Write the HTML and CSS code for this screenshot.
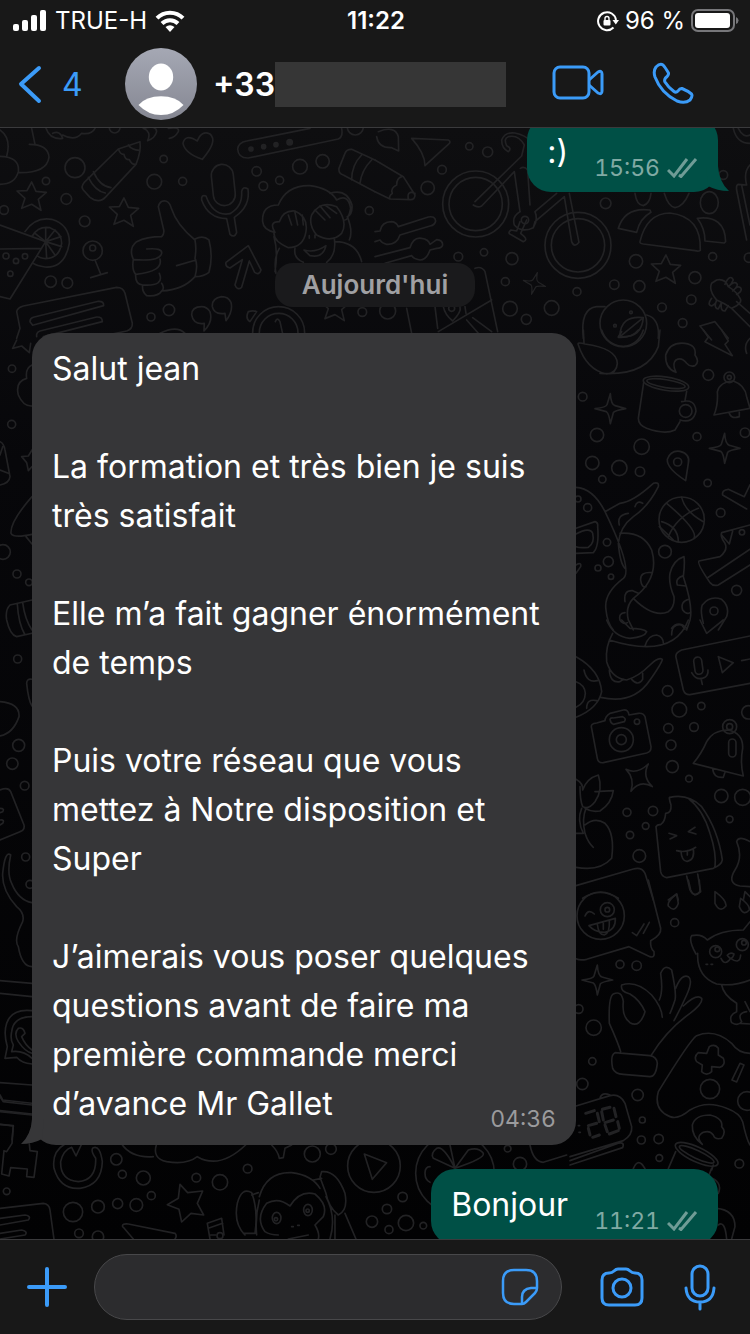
FILE: index.html
```html
<!DOCTYPE html>
<html lang="fr">
<head>
  <meta charset="UTF-8">
  <meta name="viewport" content="width=device-width, initial-scale=1.0">
  <title>Chat</title>
  <link rel="stylesheet" href="styles.css">
</head>
<body>
  <header class="header">
    <!-- Status bar -->
    <div class="status-bar">
      <div class="status-left">
        <svg width="34" height="22" viewBox="0 0 34 22" fill="#ffffff">
          <rect x="0" y="14" width="6" height="7" rx="2"></rect>
          <rect x="9" y="10" width="6" height="11" rx="2"></rect>
          <rect x="18" y="5" width="6" height="16" rx="2"></rect>
          <rect x="27" y="0" width="6" height="21" rx="2"></rect>
        </svg>
        <span>TRUE-H</span>
        <svg width="30" height="22" viewBox="0 0 30 22" fill="none" stroke="#ffffff" stroke-width="4">
          <path d="M2 8.200C9 1 21 1 28 8.200"></path>
          <path d="M7 13.500C11.500 9 18.500 9 23 13.500"></path>
          <path d="M10.500 17Q15 13.500 19.500 17L15 22Z" fill="#ffffff" stroke="none"></path>
        </svg>
      </div>
      <div class="status-time">11:22</div>
      <div class="status-right">
        <svg width="22" height="22" viewBox="0 0 22 22" fill="none" stroke="#ffffff" stroke-width="2">
          <path d="M16.500 17.500A9 9 0 1 1 19 10"></path>
          <path d="M15.500 10h6.500l-3.200 4.500z" fill="#ffffff" stroke="none"></path>
          <rect x="6.500" y="10" width="7" height="5.500" rx="1" fill="#ffffff" stroke="none"></rect>
          <path d="M8 10.500V8.500a2 2 0 0 1 4 0v2" stroke-width="1.400"></path>
        </svg>
        <span>96 %</span>
        <svg width="48" height="24" viewBox="0 0 48 24">
          <rect x="1" y="1" width="42" height="21" rx="6" fill="none" stroke="#77777a" stroke-width="2"></rect>
          <rect x="4" y="4" width="35" height="15" rx="3" fill="#ffffff"></rect>
          <path d="M45 8q2.500 1 2.500 3.500T45 15z" fill="#77777a"></path>
        </svg>
      </div>
    </div>

    <!-- Contact -->
    <div class="nav">
      <button class="back" type="button" aria-label="Retour">
        <svg width="24" height="40" viewBox="0 0 24 40" fill="none" stroke="currentColor" stroke-width="4" stroke-linecap="round" stroke-linejoin="round">
          <path d="M21 4L3 20L21 37"></path>
        </svg>
        <span>4</span>
      </button>
      <svg class="avatar" viewBox="0 0 72 72">
        <defs>
          <linearGradient id="avatar-bg" x1="0" y1="0" x2="0" y2="1">
            <stop offset="0" stop-color="#a5a8b4"></stop>
            <stop offset="1" stop-color="#858792"></stop>
          </linearGradient>
        </defs>
        <circle cx="36" cy="36" r="36" fill="url(#avatar-bg)"></circle>
        <ellipse cx="36" cy="29" rx="12.200" ry="13.500" fill="#ffffff"></ellipse>
        <path d="M13.500 57Q21 48.300 36 48.300T58.500 57Q49 67 36 67T13.500 57Z" fill="#ffffff"></path>
      </svg>
      <div class="contact">
        <span>+33</span>
        <span class="redacted"></span>
      </div>
      <div class="calls">
        <button class="icon-btn" type="button" aria-label="Appel vidéo">
          <svg width="52" height="36" viewBox="0 0 52 36" fill="none" stroke="currentColor" stroke-width="3" stroke-linejoin="round">
            <rect x="2" y="2" width="35" height="31" rx="6"></rect>
            <path d="M37 15L46 7Q50 5 50 9V26Q50 30 46 28L37 20"></path>
          </svg>
        </button>
        <button class="icon-btn" type="button" aria-label="Appel">
          <svg width="42" height="42" viewBox="0 0 42 42" fill="none" stroke="currentColor" stroke-width="3" stroke-linejoin="round">
            <path d="M4 5Q8 1 11 3Q13 5 16.500 11Q17 13 13.500 16Q12 18 13 20Q16 25 22 29.500Q24 31 26 29Q28 26 30 26.500Q36 29 39.500 32Q41 34 38 38Q33 42 25 39Q9 31 3 15Q1 9 4 5Z"></path>
          </svg>
        </button>
      </div>
    </div>
  </header>

  <main class="chat">
    <svg class="wallpaper" viewBox="0 128 750 1112" preserveAspectRatio="xMidYMin slice" aria-hidden="true">
      <defs>
        <linearGradient id="paper" x1="0" y1="0" x2="0" y2="1">
          <stop offset="0" stop-color="#0e0e10"></stop>
          <stop offset="0.300" stop-color="#07070a"></stop>
          <stop offset="1" stop-color="#020203"></stop>
        </linearGradient>
        <path id="star" d="M0-43L13-15L44-12L20 9L28 42L0 24L-30 36L-20 6L-44-16L-14-17Z"></path>
        <path id="spark" d="M0-45Q2-12 14-9L46 0Q12 6 9 12L0 45Q-4 14-12 9L-46 0Q-12-4-10-12Z"></path>
      </defs>
      <rect x="0" y="128" width="750" height="1112" fill="url(#paper)"></rect>

      <!-- Top left -->
      <g class="doodle" transform="translate(0 125) scale(0.3333)">
        <circle cx="225" cy="128" r="30"></circle><circle cx="199" cy="222" r="16"></circle>
        <circle cx="138" cy="168" r="11"></circle><circle cx="12" cy="255" r="13"></circle>
        <circle cx="254" cy="289" r="16"></circle><circle cx="463" cy="170" r="22"></circle>
        <circle cx="491" cy="102" r="11"></circle><circle cx="548" cy="169" r="12"></circle>
        <circle cx="770" cy="139" r="14"></circle><circle cx="790" cy="183" r="13"></circle>
        <circle cx="839" cy="166" r="12"></circle><circle cx="900" cy="125" r="22"></circle>
        <circle cx="968" cy="109" r="20"></circle><circle cx="1108" cy="257" r="12"></circle>
        <circle cx="152" cy="470" r="17"></circle><circle cx="202" cy="474" r="16"></circle>
        <circle cx="453" cy="576" r="12"></circle><circle cx="507" cy="555" r="17"></circle>
        <circle cx="1087" cy="561" r="13"></circle><circle cx="1066" cy="6" r="24"></circle>
        <circle cx="344" cy="8" r="16"></circle>
        <use href="#star" x="95" y="214"></use>
        <use href="#star" x="372" y="262"></use>
        <use href="#star" x="1005" y="545"></use>
        <path d="M0 15Q35 40 20 94M0 94Q60 95 55 140Q45 178 0 178M95 10L105 58M88 58Q145 58 147 97Q140 145 55 143"></path>
        <path d="M138 10Q150 45 188 40Q180 15 158 25M188 30Q225 50 245 25Q275 30 285 10M430 10Q470 0 470 20Q465 40 443 47Q455 20 430 10M505 10Q540 5 535 20Q525 38 508 40"></path>
        <path d="M355 72L420 50Q424 80 408 118L318 215Q298 238 270 217L250 195Q242 185 252 173ZM355 72Q362 90 372 88Q375 105 388 104Q395 120 408 118M385 60Q395 75 418 76M280 140Q300 185 333 188M265 157Q285 198 316 204"></path>
        <path d="M607 103Q555 85 549 55Q555 25 592 48Q605 15 630 27Q655 48 607 103Z"></path>
        <path d="M1025 10Q1030 35 1015 42L745 99Q715 100 713 72Q715 52 740 48L930 10"></path>
        <g class="dots"><circle cx="753" cy="72" r="6"></circle><circle cx="791" cy="65" r="6"></circle><circle cx="828" cy="59" r="6"></circle><circle cx="869" cy="52" r="8"></circle></g>
        <rect x="637" y="118" width="66" height="124" rx="33" transform="rotate(-6 670 180)"></rect>
        <path d="M605 225Q603 208 618 213Q640 275 690 266Q728 245 725 200Q728 182 744 192Q752 245 703 277L710 323Q703 340 690 328L680 281Q625 280 605 225Z"></path>
        <path d="M475 245Q480 225 497 228Q510 232 514 250Q530 300 585 345Q590 370 585 400Q595 420 585 455Q550 495 485 498Q475 515 440 512Q425 500 428 480Q405 478 407 448Q395 435 400 403Q385 370 410 350Q440 335 485 335Q495 325 490 310ZM440 372Q488 368 485 385Q480 410 402 404M480 402Q490 440 407 448M478 445Q495 485 428 480M485 475Q495 490 485 498M530 422L588 405M585 342Q610 330 627 345Q640 395 627 442Q610 455 585 455"></path>
        <path d="M745 362L783 435Q778 452 764 442L748 408L725 487Q712 498 705 480L727 404L690 429Q675 425 678 412Z"></path>
        <path d="M835 240Q860 180 930 182Q990 190 1010 225Q1045 205 1052 250Q1045 285 1035 285M990 205Q1040 190 1056 240Q1058 270 1042 275Q1060 320 1048 345M835 240Q785 240 788 290Q790 315 825 322M825 322Q805 290 838 290Q850 255 885 258Q925 275 918 320Q910 368 865 368Q820 350 822 322M935 270Q960 225 1010 245Q1045 290 1025 325Q995 355 950 330Q925 300 935 270M865 270L875 300M885 262L893 300M907 270L910 300M945 255L975 285M960 243L990 278M975 240L1010 265M928 332v8M945 330v8M912 375Q945 385 978 362Q970 400 930 392ZM885 370Q880 400 910 412M1003 340Q1010 390 980 412M822 335Q835 380 825 440M838 370Q820 400 828 445M1005 350Q1070 350 1085 410"></path>
        <circle cx="278" cy="377" r="29"></circle><circle cx="278" cy="369" r="9"></circle>
        <path d="M285 405L302 447M272 458L322 443"></path>
        <path d="M75 320Q105 275 155 283Q210 300 208 355Q195 430 135 426Q110 422 100 415M97 333Q115 302 150 308Q185 322 185 355Q178 400 137 401Q120 400 112 393M137 350V308M137 350L165 315M137 350L183 335M137 350L185 365M137 350L165 390M137 350L140 400M137 350L105 325"></path>
        <path d="M0 300L137 350L30 522L0 515M0 372L125 370"></path>
        <circle cx="18" cy="393" r="9"></circle><circle cx="48" cy="408" r="8"></circle><circle cx="75" cy="394" r="8"></circle><circle cx="31" cy="446" r="8"></circle>
        <path d="M50 640L60 610L50 560Q52 548 70 543L350 487Q370 487 375 505L397 595Q398 612 380 618L300 635M90 590Q90 580 100 577L295 529Q312 528 311 542L98 601ZM110 635Q108 622 120 618L290 576Q307 575 307 590L130 635"></path>
        <path d="M605 545Q575 545 575 570Q580 600 613 595L612 618Q640 590 630 560Q620 545 605 545M665 515Q635 520 637 545Q642 570 675 565L678 587Q700 560 693 532Q685 515 665 515M745 560Q760 555 770 560L750 590Q735 580 745 560"></path>
        <circle cx="836" cy="623" r="78"></circle><circle cx="836" cy="623" r="58"></circle><path d="M826 590Q832 575 840 590L850 635"></path>
        <path d="M1125 105L1055 73Q1040 72 1035 85L1017 130Q1015 145 1030 150L1125 200M1085 90Q1055 120 1055 165M1115 105Q1085 135 1080 175M480 625Q530 600 555 625"></path>
      </g>

      <!-- Top right -->
      <g class="doodle" transform="translate(375 125) scale(0.3333)">
        <circle cx="283" cy="64" r="11"></circle><circle cx="338" cy="81" r="15"></circle>
        <circle cx="201" cy="134" r="13"></circle><circle cx="158" cy="189" r="20"></circle>
        <circle cx="250" cy="395" r="13"></circle><circle cx="327" cy="382" r="11"></circle>
        <circle cx="411" cy="401" r="18"></circle><circle cx="391" cy="470" r="12"></circle>
        <circle cx="405" cy="551" r="22"></circle><circle cx="530" cy="549" r="22"></circle>
        <circle cx="454" cy="583" r="15"></circle><circle cx="606" cy="500" r="12"></circle>
        <circle cx="692" cy="235" r="16"></circle><circle cx="783" cy="409" r="20"></circle>
        <circle cx="718" cy="479" r="14"></circle><circle cx="793" cy="484" r="17"></circle>
        <circle cx="960" cy="458" r="18"></circle><circle cx="1013" cy="395" r="12"></circle>
        <circle cx="949" cy="524" r="14"></circle><circle cx="861" cy="547" r="13"></circle>
        <circle cx="923" cy="594" r="13"></circle><circle cx="1045" cy="150" r="13"></circle>
        <circle cx="1122" cy="398" r="14"></circle><circle cx="38" cy="558" r="24"></circle>
        <circle cx="302" cy="237" r="99"></circle><circle cx="302" cy="237" r="80"></circle>
        <circle cx="609" cy="361" r="99"></circle><circle cx="609" cy="361" r="80"></circle>
        <path d="M300 230L440 93M320 243L418 140L435 260M436 130Q448 122 458 135L465 240M295 240Q308 250 320 243M440 93L448 60Q430 28 400 35Q385 40 395 62Q412 70 400 80Q380 70 380 45Q390 20 420 24Q450 30 470 50"></path>
        <circle cx="450" cy="285" r="11"></circle>
        <path d="M435 260Q410 275 418 300Q440 325 475 308Q490 285 480 260L545 205M475 308L480 290L568 215L590 350Q598 370 612 352L583 205M435 290L425 318L408 315Q395 325 410 330L445 350Q458 345 448 335L437 325L455 285"></path>
        <path d="M10 20Q60 0 70 35L71 78L50 68Q10 70 5 35M110 40L220 45Q230 50 220 58L150 122Q150 85 110 40Z"></path>
        <path d="M0 105L85 155L120 210Q120 225 105 224L45 222L0 200M80 155Q65 160 65 180Q45 190 52 205Q40 215 45 222M120 205Q95 195 100 222"></path>
        <path d="M0 320L15 318Q20 290 50 290Q65 292 70 305L160 276Q180 272 182 288Q180 300 165 303L75 330Q65 360 35 358Q20 355 15 345L0 350M0 395L105 368Q115 335 140 340Q160 342 165 358L185 344Q203 345 203 360Q200 370 185 370L165 375Q155 405 135 405Q115 402 110 392L30 415"></path>
        <use href="#spark" x="478" y="475" transform="rotate(15 478 475) translate(120 119) scale(0.750)"></use>
        <path d="M300 430Q320 422 330 440L368 620M95 550L110 625M180 545L188 610M205 545Q210 570 233 588Q260 560 255 545M190 620L350 525M275 585L310 625M293 578L350 620M270 545L273 565"></path>
        <circle cx="230" cy="550" r="9"></circle>
        <path d="M795 350Q815 265 885 264Q980 275 976 376Q970 380 960 377L805 357Q793 355 795 350ZM730 310Q750 245 825 255L828 262Q795 280 785 322ZM967 280Q1050 270 1052 350L1048 354L990 348Q990 310 967 280M780 205Q785 240 805 242Q825 235 828 205M868 205Q880 245 900 248Q925 245 942 205"></path>
        <ellipse cx="1003" cy="233" rx="27" ry="33"></ellipse>
        <use href="#star" x="873" y="433"></use>
        <path d="M1075 10Q1085 55 1125 55M1090 10Q1105 40 1125 30M1125 120Q1105 140 1115 180L1090 178Q1083 180 1085 195L1115 345M1100 180Q1105 205 1125 300"></path>
        <path d="M1025 465Q1050 460 1060 485Q1085 500 1095 520Q1105 535 1070 550Q1050 535 1025 525Q1000 495 1010 475ZM1070 550L1125 605M1085 530L1125 565M1050 478Q1065 445 1075 465Q1065 485 1060 485Q1080 465 1087 478Q1088 485 1073 498Q1090 478 1098 490Q1102 500 1085 508M1010 520Q995 540 1010 543Q1025 535 1025 525Q1015 550 1030 552L1040 532Q1035 560 1050 558L1060 542"></path>
        <path d="M625 640Q615 550 665 545L690 545M815 570Q855 580 850 640"></path>
        <circle cx="745" cy="595" r="70"></circle><path d="M735 635Q735 570 805 578Q800 640 735 635L805 578"></path><circle cx="720" cy="602" r="4"></circle><circle cx="768" cy="562" r="4"></circle>
        <path d="M975 603L1020 590L1060 640M975 603L1010 645"></path>
      </g>

      <!-- Right, upper -->
      <g class="doodle" transform="translate(570 330) scale(0.3333)">
        <circle cx="38" cy="200" r="13"></circle><circle cx="81" cy="315" r="20"></circle>
        <circle cx="67" cy="399" r="20"></circle><circle cx="148" cy="414" r="23"></circle>
        <circle cx="210" cy="425" r="14"></circle><circle cx="97" cy="448" r="11"></circle>
        <circle cx="215" cy="350" r="23"></circle><circle cx="381" cy="320" r="12"></circle>
        <circle cx="415" cy="135" r="16"></circle><circle cx="525" cy="308" r="14"></circle>
        <circle cx="413" cy="459" r="11"></circle><circle cx="452" cy="548" r="13"></circle>
        <circle cx="500" cy="781" r="15"></circle><circle cx="285" cy="665" r="19"></circle>
        <circle cx="24" cy="507" r="9"></circle><circle cx="53" cy="533" r="12"></circle>
        <circle cx="111" cy="637" r="11"></circle><circle cx="115" cy="695" r="15"></circle>
        <circle cx="84" cy="714" r="9"></circle><circle cx="123" cy="740" r="8"></circle>
        <path d="M25 45Q20 35 45 42Q140 55 142 100Q140 130 110 132Q50 120 25 45ZM90 130Q230 140 265 50L270 0M95 0Q110 45 160 50Q205 45 220 0M145 20L155 5M145 22Q185 25 205 0M40 0L42 40"></path>
        <path d="M318 127Q285 115 287 75Q300 35 345 40Q380 45 375 75Q390 95 375 107Q360 112 350 100Q335 80 318 90Q305 100 318 127"></path>
        <path d="M400 0L415 22L405 35L487 77L465 43L475 33L455 0M540 25Q520 45 530 70"></path>
        <use href="#spark" x="121" y="236"></use><use href="#spark" x="464" y="355"></use>
        <ellipse cx="288" cy="161" rx="69" ry="20" transform="rotate(9 288 161)"></ellipse><ellipse cx="288" cy="161" rx="58" ry="12" transform="rotate(9 288 161)"></ellipse>
        <path d="M221 158L205 265Q205 285 230 295Q285 315 315 300L330 275M350 184L345 212M335 215Q375 205 378 243Q370 282 330 270"></path><circle cx="347" cy="243" r="19"></circle>
        <path d="M432 255Q445 225 442 185Q450 155 490 153Q525 165 530 200L540 235L432 255M478 250Q485 268 508 260V247"></path><circle cx="478" cy="142" r="16"></circle><circle cx="478" cy="142" r="6"></circle>
        <path d="M347 452Q290 415 292 388Q302 360 330 364Q362 372 355 400Z"></path><circle cx="323" cy="396" r="12"></circle>
        <circle cx="335" cy="569" r="68"></circle><path d="M290 520Q385 600 372 625M275 575Q325 590 325 635M335 502Q345 545 400 575M385 535Q320 560 295 620M268 590Q290 610 310 630"></path>
        <path d="M18 472Q70 475 105 545Q190 720 160 745Q100 790 108 840Q112 880 130 900M105 545L150 520Q190 515 250 460Q268 455 265 470Q235 530 190 560Q150 590 145 640Q150 700 165 715M150 610Q220 605 245 660Q270 745 190 805Q165 830 175 870L190 900M190 805Q250 865 295 845Q315 830 312 800Q295 760 300 730Q310 690 342 680Q345 700 340 740Q370 830 360 870L350 900M148 585Q140 555 175 550M195 530Q200 510 218 520M245 728Q210 725 212 750Q215 775 228 770M165 815Q160 780 188 782L205 790M165 848Q145 850 150 870Q160 885 172 878M340 737Q315 745 322 765L348 768M356 808Q330 815 338 840Q350 855 360 848M305 895Q325 870 350 895"></path>
        <path d="M18 595L75 575Q85 578 83 590Q88 650 70 668L18 670M18 612Q60 590 68 610Q75 640 55 652Q30 655 18 650M18 705Q35 695 32 710L18 730"></path>
        <path d="M540 465L523 500L475 478Q455 480 458 495L530 537M540 585L455 608Q450 620 465 640Q475 660 450 680L387 693Q380 700 420 758Q430 770 445 765L540 705M415 742L540 658M455 615L478 642L488 603M400 880Q390 840 397 825Q420 795 455 808Q480 830 470 860L445 900"></path><circle cx="432" cy="843" r="12"></circle><circle cx="516" cy="607" r="8"></circle>
      </g>

      <!-- Right, middle -->
      <g class="doodle" transform="translate(570 620) scale(0.3333)">
        <circle cx="293" cy="213" r="16"></circle><circle cx="328" cy="269" r="22"></circle>
        <circle cx="394" cy="258" r="11"></circle><circle cx="295" cy="325" r="14"></circle>
        <circle cx="372" cy="321" r="13"></circle><circle cx="303" cy="375" r="15"></circle>
        <circle cx="307" cy="440" r="18"></circle><circle cx="357" cy="476" r="10"></circle>
        <circle cx="454" cy="528" r="20"></circle><circle cx="518" cy="532" r="24"></circle>
        <circle cx="479" cy="598" r="10"></circle><circle cx="249" cy="573" r="14"></circle>
        <circle cx="171" cy="577" r="12"></circle><circle cx="227" cy="618" r="10"></circle>
        <circle cx="180" cy="645" r="11"></circle><circle cx="208" cy="708" r="19"></circle>
        <circle cx="535" cy="277" r="20"></circle>
        <path d="M110 0Q130 50 180 55Q225 50 230 35Q220 25 180 25L155 0M128 40Q105 80 110 125Q125 175 170 180Q205 170 240 135Q265 110 277 118Q275 130 240 180Q190 255 92 232M118 60Q310 120 355 0M118 150Q120 190 150 185L160 178M185 178Q205 200 218 178V160M225 78Q235 45 260 45Q280 50 280 70M305 45Q305 10 335 15L345 28M18 110Q90 150 95 215Q85 265 18 292M18 185Q45 195 46 220Q45 250 18 262M42 150Q50 190 82 182M50 265Q50 235 80 242"></path>
        <path d="M390 0L410 40L460 0M540 48L335 90Q315 98 318 112L340 210Q345 225 360 224L540 190M515 122L540 117M445 110L490 128L457 158Z"></path><rect x="373" y="111" width="24" height="52" rx="12" transform="rotate(-8 385 137)"></rect><path d="M365 158Q380 185 405 172Q415 165 414 150M393 175L397 193"></path>
        <path d="M65 325Q60 310 80 309L105 302Q105 290 120 280L160 270Q175 268 177 285L205 280Q220 278 225 290L243 380Q244 395 230 399L100 428Q85 430 82 415ZM120 298Q122 292 130 294L158 290Q170 295 163 305L130 313Q122 310 120 298"></path><circle cx="154" cy="359" r="36"></circle><circle cx="154" cy="359" r="15"></circle><circle cx="201" cy="305" r="8"></circle>
        <path d="M168 448Q200 465 235 432Q215 470 247 500Q210 478 183 514Q195 475 168 448Z"></path>
        <path d="M370 430Q395 400 410 365Q430 330 475 330Q520 340 518 385Q510 430 520 468Q450 450 370 430M428 445Q430 475 460 472L465 457"></path><circle cx="479" cy="320" r="21"></circle><circle cx="479" cy="320" r="9"></circle><rect x="476" y="357" width="22" height="54" rx="11"></rect>
        <path d="M272 614Q285 605 287 580Q305 580 303 555Q295 530 300 532Q355 520 395 560Q445 630 457 720Q455 735 430 745L290 773Q275 770 272 755L258 620Q262 613 272 614M355 535Q400 570 420 640Q440 700 435 742M297 640L320 647L300 657M375 622L355 635L378 642M320 692Q350 700 377 682M333 694Q335 725 352 724Q375 720 370 686M352 692V705M350 768L360 810Q372 835 392 815L383 762"></path>
        <path d="M18 478Q40 490 38 510Q50 475 85 465Q100 510 75 545Q55 570 38 560Q30 540 30 500M75 515L130 512Q125 550 90 573Q65 578 45 565M35 565Q20 600 40 640L18 640M48 565Q35 595 45 640Q55 670 70 682M45 615Q75 590 105 610Q135 640 125 715Q90 755 18 742"></path>
        <path d="M18 797L190 747Q215 740 225 760L250 840M38 835Q90 800 145 835M540 665Q505 645 500 665Q520 710 495 750Q470 790 510 798L540 800M295 840L320 822L325 840M520 840L525 815L545 835"></path>
      </g>

      <!-- Right, lower -->
      <g class="doodle" transform="translate(570 880) scale(0.3333)">
        <circle cx="314" cy="128" r="12"></circle><circle cx="150" cy="253" r="12"></circle>
        <circle cx="200" cy="257" r="14"></circle><circle cx="71" cy="443" r="23"></circle>
        <circle cx="67" cy="544" r="11"></circle><circle cx="37" cy="612" r="17"></circle>
        <circle cx="26" cy="387" r="13"></circle><circle cx="203" cy="645" r="17"></circle>
        <circle cx="217" cy="720" r="9"></circle><circle cx="214" cy="780" r="12"></circle>
        <circle cx="266" cy="777" r="14"></circle><circle cx="268" cy="834" r="10"></circle>
        <circle cx="508" cy="851" r="13"></circle><circle cx="420" cy="627" r="29"></circle><circle cx="531" cy="663" r="28"></circle>
        <circle cx="92" cy="107" r="71"></circle><circle cx="112" cy="89" r="21"></circle><circle cx="112" cy="89" r="7"></circle>
        <path d="M45 108Q55 85 73 102M57 137L136 115Q138 150 105 157Q75 158 57 137M82 132Q85 165 103 165Q120 160 118 122M100 130V148M187 158L200 167L222 132M220 160L238 127M235 0L272 145Q275 165 242 182Q240 205 252 215Q255 235 240 230L177 200L50 238Q30 242 18 236"></path>
        <path d="M320 42Q290 65 295 78Q315 100 325 70ZM435 35Q470 60 468 78Q450 100 435 70ZM512 55Q540 75 538 90Q520 110 508 80ZM355 0L362 30Q372 55 390 35L388 0"></path>
        <use href="#spark" x="82" y="300"></use>
        <path d="M378 222Q355 180 365 167Q395 160 412 180Q450 150 520 150L540 125M383 220Q380 290 440 312Q490 320 540 300M455 315Q460 345 500 370V395Q475 405 485 428Q505 440 515 425Q500 400 530 395M510 430L540 432M525 365L540 395"></path><circle cx="437" cy="215" r="18"></circle><circle cx="442" cy="208" r="7"></circle><circle cx="517" cy="194" r="18"></circle><circle cx="522" cy="188" r="7"></circle><path d="M472 226Q480 215 492 222Q490 235 480 235ZM453 235Q465 260 482 235Q510 255 512 225M408 253h5M423 253h5"></path>
        <path d="M152 515Q145 490 118 430Q115 350 130 342Q155 330 160 365Q155 410 180 428Q210 445 225 395Q210 360 180 342Q150 335 155 315Q200 300 245 345Q275 380 277 412M268 360Q280 335 272 280Q285 250 305 270Q320 340 315 360Q305 390 300 400M317 325Q335 280 355 290Q370 300 350 345Q330 390 312 422M340 378Q380 340 395 355Q400 370 360 400Q290 450 243 527M135 518Q120 525 128 565Q135 582 160 583L240 590Q258 590 262 550Q260 530 240 527Z"></path>
        <path d="M540 520Q505 520 485 490Q435 445 380 467Q360 480 265 635Q250 690 300 710Q325 720 360 690Q410 660 470 685Q510 700 518 725Q530 780 540 795M418 500Q435 490 445 505V525L460 535Q468 555 450 562L425 560V575Q410 590 395 575L397 555L380 545Q370 530 385 518L410 520ZM510 550L522 555L500 606L486 600Z"></path>
        <path d="M397 793Q365 770 367 735Q375 705 420 705Q460 715 455 740Q470 755 455 775Q435 780 430 765Q420 750 400 757Q375 770 397 793"></path>
        <ellipse cx="380" cy="823" rx="70" ry="22" transform="rotate(25 380 823)"></ellipse><ellipse cx="380" cy="823" rx="57" ry="12" transform="rotate(25 380 823)"></ellipse><path d="M317 815L295 866M430 855L425 870"></path>
        <path d="M18 678L120 647Q150 640 165 670L185 740Q188 765 160 782L0 830M90 655Q95 635 120 645M0 842L145 790Q165 785 158 803L0 855M25 737h4M27 757h4M190 866Q205 830 225 866"></path>
        <path class="digits" d="M47 700L73 692M82 700L88 725M55 737L80 730M55 745L60 765M68 772L88 765M97 688L120 682M95 695L100 720M132 685L138 710M105 728L130 720M105 735L112 755M143 725L148 745M118 762L145 752"></path>
      </g>

      <!-- Bottom strip -->
      <g class="doodle" transform="translate(0 1090) scale(0.3333)">
        <circle cx="349" cy="208" r="17"></circle><circle cx="367" cy="253" r="12"></circle>
        <circle cx="430" cy="264" r="21"></circle><circle cx="454" cy="317" r="12"></circle>
        <circle cx="409" cy="345" r="19"></circle><circle cx="353" cy="341" r="15"></circle>
        <circle cx="294" cy="350" r="19"></circle><circle cx="219" cy="366" r="29"></circle>
        <circle cx="237" cy="430" r="13"></circle><circle cx="294" cy="440" r="17"></circle>
        <circle cx="20" cy="304" r="10"></circle><circle cx="589" cy="263" r="13"></circle>
        <circle cx="660" cy="277" r="23"></circle><circle cx="743" cy="236" r="13"></circle>
        <circle cx="937" cy="192" r="24"></circle><circle cx="993" cy="177" r="16"></circle>
        <circle cx="1208" cy="321" r="14"></circle><circle cx="1161" cy="357" r="14"></circle>
        <circle cx="1116" cy="395" r="17"></circle><circle cx="1167" cy="419" r="12"></circle>
        <circle cx="1218" cy="399" r="23"></circle><circle cx="1270" cy="407" r="10"></circle>
        <path d="M540 283L563 308L608 303L592 340L611 375L573 370L545 396L537 358L502 344L535 325Z"></path>
        <path d="M0 20L10 35L96 45M0 65L96 75M0 103L40 108L36 160L20 185L12 182L5 252L27 258L32 233L82 237L80 260L102 262L112 185L90 182L88 162"></path>
        <path d="M195 162Q155 185 162 235Q180 300 240 295Q305 285 307 215Q300 165 280 173Q270 180 287 205Q290 270 235 275Q180 270 182 215Q190 180 215 172L228 198L245 162M365 162Q395 205 460 200M470 162Q455 205 500 215Q560 225 592 200Q660 240 740 162M815 165Q835 185 838 205L850 203L855 175L875 165"></path>
        <path d="M0 355L130 340Q148 342 150 360L162 448M0 385L75 375Q95 378 85 390L0 405M0 430L65 420Q85 425 75 435L0 447M368 410Q365 400 385 402L525 430Q532 438 525 447M370 412L400 447M622 400L665 385L672 435M622 400L630 447M625 415L668 400M632 435h15"></path><circle cx="660" cy="437" r="9"></circle>
        <path d="M778 320Q800 245 875 248Q935 255 960 295M778 330Q765 380 770 435M755 308Q725 290 712 340Q700 400 735 435M755 308Q775 360 765 430H730M755 315L775 308M870 348Q835 320 800 340Q765 385 795 425Q810 435 835 435M870 348Q900 300 945 312Q985 345 970 380L945 405Q960 430 955 447M965 245Q1010 240 1035 310Q1045 360 1015 375Q985 350 978 310L960 262ZM940 270L965 265M978 320Q1010 380 990 447M1005 375V447M1035 370L1068 447M875 410h5M893 406h5M865 447L925 435"></path><ellipse cx="830" cy="384" rx="13" ry="17"></ellipse><ellipse cx="924" cy="360" rx="13" ry="17"></ellipse><circle cx="828" cy="388" r="5"></circle><circle cx="923" cy="362" r="5"></circle>
        <circle cx="1122" cy="228" r="79"></circle><path d="M1093 192L1160 218L1117 268Z"></path>
      </g>
      <g class="doodle" transform="translate(430 1090) scale(0.3333)">
        <circle cx="233" cy="176" r="10"></circle><circle cx="270" cy="222" r="20"></circle>
        <circle cx="75" cy="250" r="118"></circle><path d="M75 235L10 205Q0 190 20 175Q40 165 75 235ZM75 235L60 165M75 235L115 180Q145 170 160 190Q165 205 75 235M0 230Q-15 230-15 250T0 277"></path>
        <path d="M300 165Q310 215 340 217L410 195M860 355Q915 360 915 410L905 447M865 405Q885 390 890 447M845 235L835 260Q880 275 865 310"></path>
      </g>

      <!-- Left edge -->
      <g class="doodle" transform="translate(0 340) scale(0.3333)">
        <circle cx="36" cy="86" r="11"></circle><circle cx="35" cy="253" r="12"></circle><circle cx="9" cy="636" r="22"></circle><circle cx="51" cy="702" r="12"></circle><circle cx="87" cy="727" r="10"></circle><circle cx="53" cy="957" r="12"></circle>
        <path d="M50 0L38 25L65 18L88 38L92 10M96 75Q75 85 80 115Q45 125 55 165Q70 200 96 198M0 305Q12 310 15 330L30 410Q28 430 0 435M8 320L0 345M25 400L0 390M96 330L85 348L65 350L80 368L85 392L96 380M96 470Q30 545 33 580Q40 595 96 583M78 590L96 612M96 780L30 795Q15 810 20 840Q30 885 50 890L96 880M52 792Q55 850 75 885M68 788Q75 840 96 870M96 1018Q80 1015 80 1030Q85 1080 96 1098M0 1085Q60 1090 57 1130Q40 1180 0 1188"></path>
      </g>
      <g class="doodle" transform="translate(0 740) scale(0.3333)">
        <circle cx="56" cy="16" r="18"></circle><circle cx="37" cy="71" r="17"></circle><circle cx="74" cy="137" r="13"></circle><circle cx="77" cy="351" r="12"></circle><circle cx="90" cy="433" r="12"></circle>
        <path d="M0 150Q25 140 32 155L72 255Q75 270 60 275L0 300M0 205Q15 205 8 215L0 218M0 240Q15 238 8 250L0 255M32 345Q15 330 8 400Q5 450 50 500Q75 520 68 545Q40 600 55 620Q65 680 96 680M32 345Q20 400 35 430Q55 480 96 488M0 722L96 730M0 760L96 770M96 812Q35 805 20 850Q10 880 22 920L15 955L50 952Q65 970 96 972M96 830Q40 830 35 875Q30 900 40 915L35 935Q70 930 96 955M55 865Q70 860 75 880L65 890Q75 915 96 930M55 865Q40 880 55 905Q75 935 96 940M0 1028L96 1035M0 1065L8 1080L96 1090M0 1112L96 1122M0 1153L40 1157L36 1200"></path>
      </g>
    </svg>

    <div class="messages">
      <div class="bubble sent">
        <p>:)</p>
        <div class="meta">
          <span>15:56</span>
          <svg class="ticks" viewBox="0 0 31 20"><path d="M1 12L7 18L20 1M12 17L14 18.500L29 1"></path></svg>
        </div>
        <svg class="tail" viewBox="0 0 24 26"><path d="M12 0Q13 16 23 25Q11 25 2 20L0 0Z"></path></svg>
      </div>

      <div class="day">Aujourd'hui</div>

      <div class="bubble received">
        <p>Salut jean</p>
        <p>La formation et très bien je suis très satisfait</p>
        <p>Elle m’a fait gagner énormément de temps</p>
        <p>Puis votre réseau que vous mettez à Notre disposition et Super</p>
        <p>J’aimerais vous poser quelques questions avant de faire ma première commande merci d’avance Mr Gallet <span class="meta">04:36</span></p>
        <svg class="tail" viewBox="0 0 24 26"><path d="M12 0Q11 16 1 25Q13 25 22 20L24 0Z"></path></svg>
      </div>

      <div class="bubble sent">
        <p>Bonjour</p>
        <div class="meta">
          <span>11:21</span>
          <svg class="ticks" viewBox="0 0 31 20"><path d="M1 12L7 18L20 1M12 17L14 18.500L29 1"></path></svg>
        </div>
      </div>
    </div>
  </main>

  <!-- Composer -->
  <footer class="composer">
    <button class="icon-btn" type="button" aria-label="Ajouter">
      <svg width="40" height="40" viewBox="0 0 40 40" fill="none" stroke="currentColor" stroke-width="4" stroke-linecap="round">
        <path d="M20 2V38M2 20H38"></path>
      </svg>
    </button>
    <div class="field">
      <input type="text" class="field-input" aria-label="Message">
      <button class="icon-btn" type="button" aria-label="Stickers">
        <svg width="38" height="38" viewBox="0 0 38 38" fill="none" stroke="currentColor" stroke-width="2.500" stroke-linejoin="round">
          <path d="M21 36H13Q2 36 2 25V13Q2 2 13 2H25Q36 2 36 13V20Q36 23 34 25L25 34Q23 36 21 36Z"></path>
          <path d="M36 20H30Q21 21 21 29V36"></path>
        </svg>
      </button>
    </div>
    <button class="icon-btn camera" type="button" aria-label="Appareil photo">
      <svg width="44" height="40" viewBox="0 0 44 40" fill="none" stroke="currentColor" stroke-width="3" stroke-linejoin="round">
        <path d="M9 6Q12 6 14 4Q16 2 18 2H26Q28 2 30 4Q32 6 35 6Q42 6 42 13V31Q42 38 35 38H9Q2 38 2 31V13Q2 6 9 6Z"></path>
        <circle cx="22" cy="21" r="9"></circle>
      </svg>
    </button>
    <button class="icon-btn" type="button" aria-label="Message vocal">
      <svg width="34" height="48" viewBox="0 0 34 48" fill="none" stroke="currentColor" stroke-width="3" stroke-linecap="round">
        <rect x="9" y="3" width="16" height="30" rx="8"></rect>
        <path d="M3 25Q4 39 17 39T31 25M17 39V46"></path>
      </svg>
    </button>
  </footer>
</body>
</html>
```
FILE: styles.css
```css
* {
  margin: 0;
  padding: 0;
  box-sizing: border-box;
}

body {
  height: 100vh;
  display: flex;
  flex-direction: column;
  background: #000000;
  color: #ffffff;
  font-family: Inter, "Liberation Sans", sans-serif;
  font-size: 32px;
  line-height: 49px;
}

button {
  background: none;
  border: none;
  color: #3b9bf8;
  font: inherit;
  cursor: pointer;
}

svg {
  display: block;
  flex-shrink: 0;
}

.header {
  background: #181818;
  border-bottom: 1px solid #3a3a3c;
}

.status-bar {
  height: 41px;
  padding: 0 11px 0 13px;
  display: grid;
  grid-template-columns: 1fr auto 1fr;
  align-items: center;
  font-size: 24px;
  line-height: 41px;
}

.status-left,
.status-right {
  display: flex;
  align-items: center;
  gap: 8px;
}

.status-right {
  justify-content: flex-end;
  gap: 6px;
}

.status-time {
  font-weight: 600;
}

.nav {
  height: 86px;
  padding: 0 56px 0 18px;
  display: flex;
  align-items: center;
}

.back {
  width: 107px;
  display: flex;
  align-items: center;
  gap: 20px;
}

.avatar {
  width: 72px;
  height: 72px;
}

.contact {
  flex: 1;
  margin-left: 16px;
  display: flex;
  align-items: center;
  font-weight: 600;
}

.redacted {
  width: 231px;
  height: 45px;
  background: #363636;
}

.icon-btn {
  display: flex;
  align-items: center;
  justify-content: center;
}

.calls {
  display: flex;
  align-items: center;
  gap: 48px;
  padding-bottom: 3px;
}

.chat {
  flex: 1;
  min-height: 0;
  position: relative;
  overflow: hidden;
}

.wallpaper {
  position: absolute;
  top: 0;
  left: 0;
  width: 100%;
  height: 100%;
}

.doodle {
  fill: none;
  stroke: #222224;
  stroke-width: 5;
  stroke-linecap: round;
  stroke-linejoin: round;
}

.dots {
  fill: #222224;
}

.digits {
  stroke-width: 9;
}

.messages {
  position: relative;
  margin-top: -12px;
  padding: 0 32px;
  display: flex;
  flex-direction: column;
}

.bubble {
  position: relative;
  padding: 11px 20px 16px;
  border-radius: 24px;
}

.sent {
  align-self: flex-end;
  display: flex;
  align-items: flex-end;
  gap: 26px;
  background: #005046;
}

.received {
  align-self: flex-start;
  max-width: 544px;
  margin-bottom: 24px;
  padding-bottom: 17px;
  background: #363638;
}

.received p + p {
  margin-top: 49px;
}

.meta {
  display: flex;
  align-items: center;
  gap: 7px;
  font-size: 23px;
  line-height: 32px;
  font-variant-numeric: tabular-nums;
}

.sent .meta {
  margin-bottom: -8px;
  color: #80aaa4;
}

.received .meta {
  float: right;
  margin: 24px 0 -8px;
  color: #9b9b9d;
}

.ticks {
  width: 31px;
  height: 20px;
  fill: none;
  stroke: #6f9c96;
  stroke-width: 3;
}

.tail {
  position: absolute;
  bottom: 0;
  width: 24px;
  height: 26px;
}

.sent .tail {
  right: -12px;
  fill: #005046;
}

.received .tail {
  left: -12px;
  fill: #363638;
}

.day {
  align-self: center;
  margin: 71px 0 26px;
  padding: 0 27px;
  border-radius: 18px;
  background: #1a1a1c;
  color: #a0a0a3;
  font-size: 26px;
  font-weight: 600;
  line-height: 44px;
}

.composer {
  padding: 14px 33px 14px 27px;
  display: flex;
  align-items: center;
  background: #181818;
  border-top: 1px solid #3a3a3c;
}

.field {
  flex: 1;
  min-width: 0;
  height: 66px;
  margin: 0 38px 0 27px;
  padding: 0 22px 0 32px;
  display: flex;
  align-items: center;
  background: #2c2c2e;
  border: 1px solid #48484a;
  border-radius: 33px;
}

.field-input {
  flex: 1;
  min-width: 0;
  background: none;
  border: none;
  outline: none;
  color: #ffffff;
  font: inherit;
}

.camera {
  margin-right: 39px;
}
```
